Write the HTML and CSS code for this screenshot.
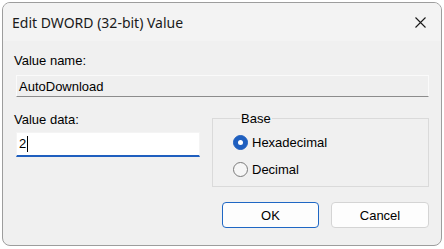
FILE: index.html
```html
<!DOCTYPE html>
<html lang="en">
<head>
    <meta charset="UTF-8">
    <title>Edit DWORD (32-bit) Value</title>
    <link rel="stylesheet" href="styles.css">
</head>
<body>
    <div class="window">
        <div class="titlebar">
            <span class="title">Edit DWORD (32-bit) Value</span>
            <svg class="close" width="11" height="11" viewBox="0 0 11 11">
                <path d="M0.5 0.5 L10.5 10.5 M10.5 0.5 L0.5 10.5" stroke="#1a1a1a" stroke-width="1.1" fill="none"/>
            </svg>
        </div>
        <div class="content">
            <label class="label">Value name:</label>
            <div class="field name-field">AutoDownload</div>
            <div class="row">
                <div class="data-col">
                    <label class="label">Value data:</label>
                    <div class="field data-field"><span class="caret">2</span></div>
                </div>
                <fieldset class="base">
                    <legend>Base</legend>
                    <div class="radio">
                        <span class="dot checked"></span>
                        <span>Hexadecimal</span>
                    </div>
                    <div class="radio">
                        <span class="dot"></span>
                        <span>Decimal</span>
                    </div>
                </fieldset>
            </div>
            <div class="buttons">
                <button class="btn primary">OK</button>
                <button class="btn">Cancel</button>
            </div>
        </div>
    </div>
</body>
</html>
```

FILE: styles.css
```css
body {
    margin: 0;
    background-color: white;
    font-family: "Liberation Sans", Arial, sans-serif;
    font-size: 13px;
    color: black;
}
.window {
    margin: 2px;
    width: 438px;
    height: 242px;
    border: 1px solid #9d9d9d;
    border-radius: 8px;
    background-color: #f0f0f0;
    overflow: hidden;
}
.titlebar {
    height: 38px;
    background-color: #f3f3f3;
    display: flex;
    align-items: center;
    justify-content: space-between;
    padding: 0 15px 0 9px;
}
.title {
    font-family: "Noto Sans", sans-serif;
    font-size: 14px;
    color: #1a1a1a;
}
.close {
    margin-top: 1px;
}
.content {
    padding: 12px 12px 0 13px;
    display: flex;
    flex-direction: column;
}
.label {
    display: block;
    line-height: 15px;
    margin-left: -2px;
}
.field {
    box-sizing: border-box;
    line-height: 15px;
    padding-left: 2px;
    display: flex;
    align-items: center;
}
.name-field {
    margin-top: 7px;
    height: 22px;
    background-color: #efefef;
    border: 1px solid #fafafa;
    border-bottom-color: #8c8c8c;
}
.row {
    display: flex;
    justify-content: space-between;
    margin-top: 15px;
}
.data-col {
    width: 184px;
}
.data-field {
    margin-top: 5px;
    height: 25px;
    background-color: white;
    border: 1px solid #f4f4f4;
    border-bottom: 2px solid #1f5fbf;
}
.caret {
    border-right: 1px solid black;
    padding-right: 1px;
    line-height: 16px;
}
.base {
    margin: -1px 0 0 0;
    width: 217px;
    box-sizing: border-box;
    border: 1px solid #dadada;
    padding: 6px 0 7px 20px;
}
.base legend {
    padding: 0 1px;
    margin-left: 7px;
    line-height: 15px;
}
.radio {
    height: 20px;
    display: flex;
    align-items: center;
    gap: 4px;
}
.radio + .radio {
    margin-top: 7px;
}
.dot {
    width: 13px;
    height: 13px;
    border-radius: 50%;
    border: 1px solid #7b7b7b;
    background-color: #f6f6f6;
    display: flex;
    align-items: center;
    justify-content: center;
}
.dot.checked {
    border-color: #1f5fbf;
    background-color: #1f5fbf;
}
.dot.checked::after {
    content: "";
    width: 5px;
    height: 5px;
    border-radius: 50%;
    background-color: white;
}
.buttons {
    display: flex;
    justify-content: flex-end;
    gap: 12px;
    margin-top: 15px;
}
.btn {
    width: 98px;
    height: 26px;
    font-family: "Liberation Sans", Arial, sans-serif;
    font-size: 13px;
    color: black;
    background-color: #fdfdfd;
    border: 1px solid #d4d4d4;
    border-radius: 4px;
}
.btn.primary {
    width: 97px;
    border-color: #1f67c4;
}
```
